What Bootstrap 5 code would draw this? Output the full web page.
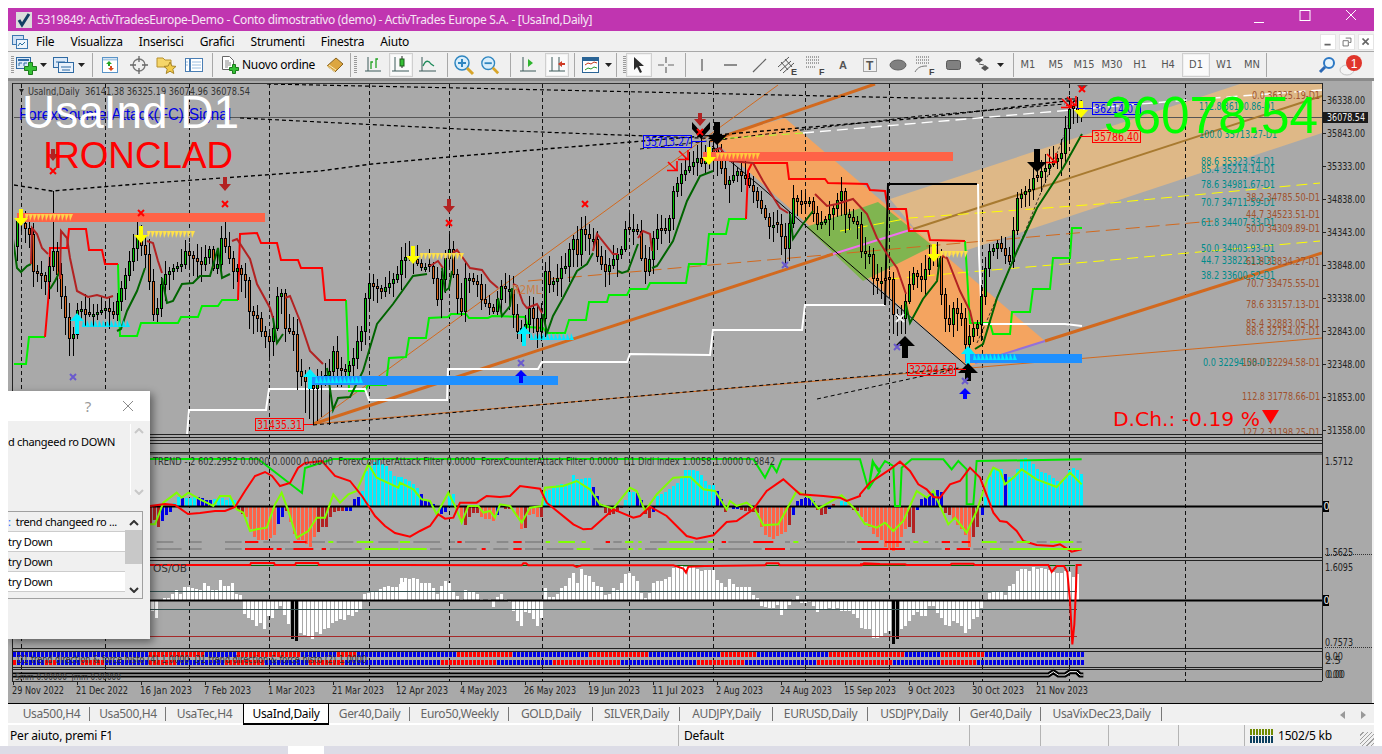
<!DOCTYPE html>
<html lang="it">
<head>
<meta charset="utf-8">
<title>ActivTrades</title>
<link href="https://cdn.jsdelivr.net/npm/bootstrap@5.3.0/dist/css/bootstrap.min.css" rel="stylesheet">
<style>
html,body{height:754px;overflow:hidden;background:#fff}
body{font-family:"Noto Sans","Open Sans",sans-serif;font-size:12px;color:#000}
.mt-win{margin:8px 8px 0;width:1366px;height:738px;background:#f0f0f0;display:flex;flex-direction:column}
.mt-title{height:23px;background:#c035b0;color:#f6e6f4;padding-left:8px;font-size:12px;letter-spacing:-.33px}
.mt-logo{width:16px;height:16px;margin-right:5px}
.mt-wc{width:46px;height:23px}
.mt-menu{height:21px;border-bottom:1px solid #a8a8a8;background:#f0f0f0;padding-left:3px;padding-top:1px}
.mt-menu-ic{width:18px;height:16px;margin-right:7px}
.mt-mi{margin-right:16px;font-size:12px;letter-spacing:-.2px}
.mt-mdi{width:16px;height:16px;background:#fff;margin-right:3px;border:1px solid #e4e4e4}
.mt-tools{height:27px;display:grid;align-items:center;justify-items:center;padding-left:3px;background:#f0f0f0;border-bottom:1px solid #8c8c8c;grid-template-columns:3px 25px 9px 3px 26px 8px 8px 34px 24px 30px 26px 6px 107px 30px 1px 6px 32px 24px 30px 5px 32px 20px 11px 34px 24px 6px 3px 26px 8px 5px 9px 26px 28px 6px 32px 28px 28px 28px 28px 26px 28px 28px 28px 28px 28px 8px 3px 7px 28px 28px 28px 28px 28px 28px 28px 28px 28px 1px 1fr 24px 26px 9px}
.mt-tools>*{height:24px;width:100%;display:flex;align-items:center;justify-content:center}
.mt-gr{background:repeating-linear-gradient(#9a9a9a 0 1px,transparent 1px 2px) right center/3px 18px no-repeat}
.mt-sp{border-right:1px solid #a8a8a8}
.mt-on{background:#fafafa;border:1px solid #cfcfcf;box-shadow:inset 0 0 0 1px #f0f0f0}
.mt-per{font-size:11px;color:#555;font-family:"DejaVu Sans",sans-serif;font-stretch:condensed}
.mt-ord{font-size:12px;justify-content:flex-start!important;padding-left:7px;gap:2px;white-space:nowrap;letter-spacing:-.3px}
.mt-chart{position:relative;height:624px;background:#a9a9a9;overflow:hidden}
.mt-chart svg.mt-plot{display:block}
.mt-dlg{position:absolute;left:0;top:312px;width:142px;height:248px;background:#f0f0f0;box-shadow:3px 3px 8px rgba(0,0,0,.45);overflow:hidden;font-size:11px;letter-spacing:-.3px;white-space:nowrap}
.mt-dlgh{height:30px;background:#fff;color:#9a9a9a;font-size:15px;justify-content:flex-end;padding-right:16px;gap:31px}
.mt-msg{height:90px;padding-top:13px}
.mt-vs{width:16px;border-left:1px solid #fff;color:#c4c4c4;margin-top:-10px}
.mt-lst{margin-top:0;height:88px;width:135px;border:1px solid #a0a0a0;border-left:0;background:#f0f0f0}
.mt-rows{width:117px;overflow:hidden}
.mt-row{height:20px;line-height:19px;border-bottom:1px solid #ccc;background:#fff;overflow:hidden}
.mt-row.alt{background:#f0f0f0}
.mt-thumb{height:34px;background:#c8c8c8;margin:4px 0 23px}
.mt-tabs{height:20px;display:grid;grid-template-columns:5px 77px 76px 77px 86px 81px 99px 84px 87px 93px 95px 92px 81px 121px 1fr;background:#f0f0f0;border-top:1px solid #000;color:#666;font-size:12px;margin-top:0;letter-spacing:-.35px}
.mt-tab{text-align:center;line-height:19px;position:relative;white-space:nowrap}
.mt-tab:not(.act)::after{content:"";position:absolute;right:0;top:3px;height:14px;border-right:1px solid #777}
.mt-tab.preact::after,.mt-tab.act::after{display:none}
.mt-tab.act{background:#fff;color:#000;border:1px solid #000;border-top:0;border-bottom-width:2px}
.mt-stat{flex:1;display:grid;grid-template-columns:670px 291px 71px 68px 70px 66px 130px;background:#f0f0f0;border-top:2px solid #fff;align-items:stretch;font-size:12px;letter-spacing:-.2px}
.mt-stat>div{border-left:1px solid #b4b4b4;padding-left:5px;line-height:21px;white-space:nowrap}
.mt-stat>div:first-child{border:0;padding-left:2px}
.mt-grip{background:repeating-linear-gradient(135deg,transparent 0 2px,#a0a0a0 2px 3px) right bottom/14px 14px no-repeat}
.mt-desk{height:8px;margin:0;display:grid;grid-template-columns:288px 36px 1fr}
.mt-desk i{background:#dcdce6}
.mt-desk i:nth-child(2){background:#fff}
.ct{font-family:"DejaVu Sans",sans-serif;font-stretch:condensed}
.ca{font-family:"Liberation Sans",sans-serif}
</style>
</head>
<body>
<div class="mt-win">
  <div class="mt-title d-flex align-items-center">
    <svg class="mt-logo" viewBox="0 0 16 16"><rect width="16" height="16" fill="#dcdcdc"/><path d="M3 8l3 5 7-11" fill="none" stroke="#123f63" stroke-width="3"/></svg>
    <span class="flex-grow-1">5319849: ActivTradesEurope-Demo - Conto dimostrativo (demo) - ActivTrades Europe S.A. - [UsaInd,Daily]</span>
    <svg class="mt-wc" viewBox="0 0 46 23"><path d="M18 14.500h10" stroke="#fff"/></svg>
    <svg class="mt-wc" viewBox="0 0 46 23"><rect x="18" y="2.500" width="10" height="10" fill="none" stroke="#fff"/></svg>
    <svg class="mt-wc" viewBox="0 0 46 23"><path d="M18 2l10 10M28 2L18 12" stroke="#fff"/></svg>
  </div>
  <div class="mt-menu d-flex align-items-center">
    <svg class="mt-menu-ic" viewBox="0 0 18 16"><rect x="1.500" y="1.500" width="11" height="9" fill="#cfe0f4" stroke="#3d78b0"/><rect x="5.500" y="5.500" width="11" height="9" fill="#eef5fc" stroke="#3d78b0"/><path d="M7 12l2-3 2 2 3-3" fill="none" stroke="#2a6f9e"/></svg>
    <span class="mt-mi">File</span><span class="mt-mi">Visualizza</span><span class="mt-mi">Inserisci</span><span class="mt-mi">Grafici</span><span class="mt-mi">Strumenti</span><span class="mt-mi">Finestra</span><span class="mt-mi">Aiuto</span>
    <span class="ms-auto d-flex">
      <svg class="mt-mdi" viewBox="0 0 16 16"><path d="M4 11h7" stroke="#666" stroke-width="2"/></svg>
      <svg class="mt-mdi" viewBox="0 0 16 16"><path d="M6.500 3.500h6v5h-2M3.500 6.500h6v6h-6z" fill="none" stroke="#666"/></svg>
      <svg class="mt-mdi me-0" viewBox="0 0 16 16"><path d="M4 4l7 7M11 4l-7 7" stroke="#666" stroke-width="2"/></svg>
    </span>
  </div>
  <div class="mt-tools">
    <div class="mt-gr"></div>
    <div><svg width="24" height="20" viewBox="0 0 24 20"><rect x="1.500" y="2.500" width="14" height="11" fill="#dbe9f8" stroke="#2f6aa3"/><path d="M3 5h11" stroke="#2f6aa3" stroke-width="2"/><path d="M4 11V8h3M9 11V8h3" fill="none" stroke="#2f6aa3"/><path d="M13.500 7.500h4v4h4v4h-4v4h-4v-4h-4v-4h4z" fill="#35c035" stroke="#1b7a1b"/></svg></div>
    <div><svg width="7" height="4"><path d="M0 0h7L3.500 4z" fill="#222"/></svg></div><i></i>
    <div><svg width="24" height="20" viewBox="0 0 24 20"><rect x="1.500" y="2.500" width="14" height="10" fill="#dbe9f8" stroke="#2f6aa3"/><path d="M4 7h9" stroke="#2f6aa3"/><rect x="6.500" y="7.500" width="15" height="10" fill="#eaf2fb" stroke="#2f6aa3"/><path d="M9 12h10M10 15h8" stroke="#2f6aa3"/></svg></div>
    <div><svg width="7" height="4"><path d="M0 0h7L3.500 4z" fill="#222"/></svg></div>
    <div class="mt-sp"></div>
    <div><svg width="20" height="20" viewBox="0 0 20 20"><rect x="2.500" y="2.500" width="15" height="15" fill="#fff" stroke="#5a94c8"/><path d="M3 4.500h14" stroke="#a8c8e4" stroke-width="2"/><path d="M9 6l3 3H10v2H8V9H6z" fill="#25a525"/><path d="M11 16l-3-3h2v-2h2v2h2z" fill="#d84a20"/></svg></div>
    <div><svg width="20" height="20" viewBox="0 0 20 20"><circle cx="10" cy="10" r="6" fill="none" stroke="#777" stroke-width="1.300"/><path d="M10 1v6M10 13v6M1 10h6M13 10h6" stroke="#666" stroke-width="1.300"/></svg></div>
    <div><svg width="20" height="20" viewBox="0 0 20 20"><path d="M1 3h6l2 2h6v7H1z" fill="#f5d66a" stroke="#b7902c"/><path d="M14 7l1.800 4 4.200.4-3.200 2.800 1 4.300-3.800-2.300-3.800 2.300 1-4.300-3.200-2.800 4.200-.4z" fill="#f3cc4b" stroke="#a8862a"/></svg></div>
    <div><svg width="20" height="18" viewBox="0 0 20 18"><rect x="1.500" y="2.500" width="17" height="13" fill="#fff" stroke="#4a7eb4"/><path d="M6 3v12" stroke="#4a7eb4" stroke-width="2"/><path d="M8 6h9M8 9h9M8 12h9M2 6h2M2 9h2" stroke="#9cbfe0"/></svg></div>
    <div class="mt-sp"></div>
    <div class="mt-ord"><svg width="20" height="20" viewBox="0 0 20 20"><path d="M2.500 1.500h7l4 4v9h-11z" fill="#fff" stroke="#666"/><path d="M5 6h4M5 8h6M5 10h6M5 12h3" stroke="#888"/><path d="M12.500 9.500h3v3h3v3h-3v3h-3v-3h-3v-3h3z" fill="#35c035" stroke="#1b7a1b"/></svg><span>Nuovo ordine</span></div>
    <div><svg width="18" height="16" viewBox="0 0 18 16"><path d="M1 9l9-8 7 6-8 8z" fill="#dca640" stroke="#8a6420"/><path d="M1 9l8 6M3 8l7 5" stroke="#fbeab8"/></svg></div>
    <div class="mt-sp"></div>
    <div class="mt-gr"></div>
    <div><svg width="20" height="20" viewBox="0 0 20 20"><path d="M5 2v14M2 16h16" stroke="#3d5a5a"/><path d="M8 14V7h2M13 13V4h2" fill="none" stroke="#22a322" stroke-width="1.300"/></svg></div>
    <div class="mt-on"><svg width="20" height="20" viewBox="0 0 20 20"><path d="M4 2v14M1 16h17" stroke="#3d5a5a"/><path d="M11 1v12" stroke="#222"/><rect x="9" y="4" width="4" height="7" fill="#35c035" stroke="#1b5a1b"/></svg></div>
    <div><svg width="20" height="20" viewBox="0 0 20 20"><path d="M4 2v14M1 16h17" stroke="#3d5a5a"/><path d="M5 11c3-7 6-5 8-2l3 2" fill="none" stroke="#1d8a5a" stroke-width="1.300"/></svg></div>
    <div class="mt-sp"></div>
    <div><svg width="22" height="22" viewBox="0 0 22 22"><circle cx="9" cy="9" r="7" fill="#d9eefb" stroke="#2f86c0" stroke-width="1.500"/><path d="M5 9h8M9 5v8" stroke="#2f86c0" stroke-width="2"/><path d="M14 14l6 6" stroke="#d8a52a" stroke-width="3"/></svg></div>
    <div><svg width="22" height="22" viewBox="0 0 22 22"><circle cx="9" cy="9" r="7" fill="#d9eefb" stroke="#2f86c0" stroke-width="1.500"/><path d="M5 9h8" stroke="#2f86c0" stroke-width="2"/><path d="M14 14l6 6" stroke="#d8a52a" stroke-width="3"/></svg></div>
    <div class="mt-sp"></div>
    <div><svg width="20" height="20" viewBox="0 0 20 20"><path d="M5 2v14M2 16h16" stroke="#3d5a5a"/><path d="M10 4l5 4-5 4z" fill="#2fb52f"/></svg></div>
    <div class="mt-on"><svg width="20" height="20" viewBox="0 0 20 20"><path d="M5 2v14M12 2v14M2 16h16" stroke="#3d5a5a"/><path d="M19 9h-3V7l-4 3 4 3v-2h3z" fill="#cf3a24" transform="translate(-1 -1)"/></svg></div>
    <div class="mt-sp"></div><i></i>
    <div><svg width="18" height="16" viewBox="0 0 18 16"><rect x=".5" y=".5" width="16" height="15" fill="#fff" stroke="#2a6496"/><rect x="1" y="1" width="15" height="3" fill="#2a6496"/><path d="M3 8l3-2 3 1 3-2 3 1" fill="none" stroke="#c43a1c"/><path d="M3 13l3-2 3 1 3-2 3 1" fill="none" stroke="#2a9a2a"/></svg></div>
    <div><svg width="7" height="4"><path d="M0 0h7L3.500 4z" fill="#222"/></svg></div>
    <div class="mt-sp"></div>
    <div class="mt-gr"></div>
    <div class="mt-on"><svg width="16" height="18" viewBox="0 0 16 18"><path d="M3 1v13l3-3 3 6 2-1-3-6h5z" fill="#2b2b2b"/></svg></div>
    <div><svg width="18" height="18" viewBox="0 0 18 18"><path d="M9 1v6M9 11v6M1 9h6M11 9h6" stroke="#666" stroke-width="1.200"/></svg></div>
    <div class="mt-sp"></div>
    <div><svg width="20" height="18" viewBox="0 0 20 18"><path d="M10 3v12" stroke="#555" stroke-width="1.200"/></svg></div>
    <div><svg width="20" height="18" viewBox="0 0 20 18"><path d="M2 9h13" stroke="#555" stroke-width="1.300"/></svg></div>
    <div><svg width="20" height="18" viewBox="0 0 20 18"><path d="M3 16L16 3" stroke="#666" stroke-width="1.200"/></svg></div>
    <div><svg width="24" height="22" viewBox="0 0 24 22"><path d="M2 13L13 3M4 17L15 7M7 19L18 9M5 8l7 8M9 5l7 8" stroke="#555" fill="none"/><text x="15" y="21" font-size="9" font-weight="700" fill="#444" class="ca">E</text></svg></div>
    <div><svg width="24" height="22" viewBox="0 0 24 22"><path d="M2 3h14M2 6h14M2 9h14M2 13h10" stroke="#555" stroke-dasharray="1 1"/><text x="15" y="21" font-size="9" font-weight="700" fill="#444" class="ca">F</text></svg></div>
    <div class="ca fw-bold mt-per">A</div>
    <div><svg width="20" height="20" viewBox="0 0 20 20"><rect x="3.500" y="3.500" width="13" height="13" fill="none" stroke="#555" stroke-dasharray="1 1"/><text x="6" y="15" font-size="12" font-weight="700" fill="#555" class="ca">T</text></svg></div>
    <div><svg width="20" height="14" viewBox="0 0 20 14"><ellipse cx="10" cy="7" rx="8" ry="5" fill="#808080" stroke="#606060"/></svg></div>
    <div><svg width="24" height="22" viewBox="0 0 24 22"><path d="M2 3h14M2 6h14M2 9h14" stroke="#555" stroke-dasharray="1 1"/><path d="M1 18c3-5 6-6 12-6" fill="none" stroke="#777"/><text x="15" y="21" font-size="9" font-weight="700" fill="#444" class="ca">F</text></svg></div>
    <div><svg width="18" height="14" viewBox="0 0 18 14"><rect x="1.500" y="2.500" width="14" height="9" rx="2" fill="#808080" stroke="#5a5a5a"/></svg></div>
    <div><svg width="16" height="18" viewBox="0 0 16 18"><path d="M5 1l4 3-4 3-4-3zM11 9l4 3-4 3-4-3z" fill="#555"/><path d="M5 8l5 1" stroke="#555"/></svg></div>
    <div><svg width="7" height="4"><path d="M0 0h7L3.500 4z" fill="#222"/></svg></div>
    <div></div>
    <div class="mt-sp"></div>
    <div class="mt-per">M1</div><div class="mt-per">M5</div><div class="mt-per">M15</div><div class="mt-per">M30</div><div class="mt-per">H1</div><div class="mt-per">H4</div><div class="mt-per mt-on">D1</div><div class="mt-per">W1</div><div class="mt-per">MN</div>
    <div class="mt-sp"></div><i></i>
    <div><svg width="18" height="18" viewBox="0 0 18 18"><circle cx="11" cy="7" r="5" fill="#e8f4fc" stroke="#2c78c4" stroke-width="2"/><path d="M7 11l-5 5" stroke="#2c68b4" stroke-width="3"/></svg></div>
    <div><svg width="26" height="24" viewBox="0 0 26 24"><ellipse cx="8" cy="17" rx="7" ry="5" fill="#f4f4f4" stroke="#c4c4c4"/><circle cx="15" cy="10" r="8" fill="#e0352b"/><text x="15" y="14.500" font-size="12" fill="#fff" text-anchor="middle" class="ca">1</text></svg></div>
    <i></i>
  </div>
  <div class="mt-chart">
    <svg id="plot" class="mt-plot" width="1366" height="624" viewBox="8 78 1366 624"></svg>
    <div class="mt-dlg">
      <div class="mt-dlgh d-flex align-items-center"><span>?</span><svg width="12" height="12" viewBox="0 0 12 12"><path d="M1 1l10 10M11 1L1 11" stroke="#8a8a8a"/></svg></div>
      <div class="mt-msg d-flex">
        <div class="flex-grow-1">d changeed ro DOWN</div>
        <div class="mt-vs me-1 d-flex flex-column justify-content-between align-items-center mb-3 pt-1"><svg width="10" height="6"><path d="M1 5l4-4 4 4" fill="none" stroke="#c8c8c8" stroke-width="2"/></svg><svg width="10" height="6"><path d="M1 1l4 4 4-4" fill="none" stroke="#c8c8c8" stroke-width="2"/></svg></div>
      </div>
      <div class="mt-lst d-flex">
        <div class="mt-rows">
          <div class="mt-row alt"><span class="text-primary">:</span>&nbsp; trend changeed ro ...</div>
          <div class="mt-row">try Down</div>
          <div class="mt-row alt">try Down</div>
          <div class="mt-row">try Down</div>
        </div>
        <div class="flex-grow-1 d-flex flex-column align-items-stretch text-center">
          <svg class="mx-auto mt-2" width="10" height="6"><path d="M1 5l4-4 4 4" fill="none" stroke="#333" stroke-width="2"/></svg>
          <div class="mt-thumb"></div>
          <svg class="mx-auto" width="10" height="6"><path d="M1 1l4 4 4-4" fill="none" stroke="#333" stroke-width="2"/></svg>
        </div>
      </div>
    </div>
  </div>
  <div class="mt-tabs">
    <i></i>
    <div class="mt-tab">Usa500,H4</div><div class="mt-tab">Usa500,H4</div><div class="mt-tab preact">UsaTec,H4</div><div class="mt-tab act">UsaInd,Daily</div><div class="mt-tab">Ger40,Daily</div><div class="mt-tab">Euro50,Weekly</div><div class="mt-tab">GOLD,Daily</div><div class="mt-tab">SILVER,Daily</div><div class="mt-tab">AUDJPY,Daily</div><div class="mt-tab">EURUSD,Daily</div><div class="mt-tab">USDJPY,Daily</div><div class="mt-tab">Ger40,Daily</div><div class="mt-tab">UsaVixDec23,Daily</div>
    <div class="d-flex justify-content-end align-items-center gap-3 pe-2"><svg width="5" height="8"><path d="M5 0v8L0 4z" fill="#999"/></svg><svg width="5" height="8"><path d="M0 0v8l5-4z" fill="#999"/></svg></div>
  </div>
  <div class="mt-stat">
    <div>Per aiuto, premi F1</div><div>Default</div><div></div><div></div><div></div><div></div>
    <div class="mt-grip d-flex align-items-center gap-1"><svg width="24" height="14" viewBox="0 0 24 14"><path d="M1 0v6M4 0v6M7 0v6M10 0v6M13 0v6M16 0v6M19 0v6M22 0v6" stroke="#6f8a00" stroke-width="2"/><path d="M1 7v7M4 7v7M7 7v7M10 7v7M13 7v7M16 7v7M19 7v7M22 7v7" stroke="#0c3f5e" stroke-width="2"/></svg><span>1502/5 kb</span></div>
  </div>
</div>
<div class="mt-desk"><i></i><i></i><i></i></div>
<script src="https://cdn.jsdelivr.net/npm/bootstrap@5.3.0/dist/js/bootstrap.bundle.min.js"></script>
<script>
(function(){
let o='';
const pts=(s,ox=0,oy=0,k=1)=>s.trim().split(/\s+/).map(p=>{const[a,b]=p.split(',').map(Number);return[ox+a/k,oy+b/k]});
const z12=s=>pts(s,400,445,3),z8=s=>pts(s,860,440,3),z5=s=>pts(s,0,380,3);
const L=(p,c,w=2,x='')=>{o+=`<polyline points="${p.map(q=>q.join(',')).join(' ')}" fill="none" stroke="${c}" stroke-width="${w}" ${x}/>`};
const R=(x,y,w,h,c,e='')=>{o+=`<rect x="${x}" y="${y}" width="${w}" height="${h}" fill="${c}" ${e}/>`};
const T=(x,y,s,f,sz,cl='ct',len=0,e='')=>{o+=`<text x="${x}" y="${y}" fill="${f}" font-size="${sz}" class="${cl}" ${len?`textLength="${len}" lengthAdjust="spacingAndGlyphs"`:''} ${e}>${s}</text>`};
const Pg=(s,c,e='')=>{o+=`<polygon points="${s}" fill="${c}" ${e}/>`};
const dash='stroke-dasharray="4 3"';

o+=`<defs><clipPath id="m"><rect x="14" y="83" width="1308" height="350"/></clipPath></defs>`;
R(8,78,1366,624,'#a9a9a9');R(1372,78,2,624,'#f0f0f0');
R(8,78,1366,2,'#8a8a8a');

o+='<g clip-path="url(#m)">';
Pg('890,198 1240,83 1322,83 1322,132 940,258','#deb887');
Pg('712,138 785,117 1045,340 968,366','#f4a460');
Pg('806,226 878,201 933,245 863,280','#80b550');
o+='</g>';
[21,105,189,269,369,449,542,629,713,805,889,982,1069,1185].forEach(x=>{L([[x+.5,83],[x+.5,680]],'#111',1,dash)});
o+='<g clip-path="url(#m)">';
L([[14,116.5],[1322,116.5]],'#555',1);
L([[313,423],[778,84]],'#d2691e',1);
L([[313,423],[1322,337]],'#d2691e',1);
L([[528,280],[1213,220]],'#d2691e',1,'stroke-dasharray="14 6"');
L([[313,423],[833,253]],'#d2691e',3);
L([[833,253],[913,228]],'#ee72ee',2);
L([[913,228],[1322,95]],'#a87a30',2);
L([[710,140],[875,83]],'#d2691e',3);
L([[975,362],[1045,340]],'#9370db',2);
L([[1045,340],[1322,252]],'#d2691e',3);
L([[14,184],[52,190],[138,183],[320,170],[372,163],[460,155],[643,140],[920,117],[1067,100],[1082,100]],'#000',1.400,dash);
L([[240,117],[460,128],[647,135],[727,138]],'#000',1.200,dash);
L([[267,83],[460,87],[917,97],[1075,98]],'#000',1.200,dash);
L([[313,424],[640,395],[960,367]],'#000',1,dash);
L([[817,398],[960,367]],'#000',1,dash);
L([[640,148],[920,115],[1065,103]],'#000',1,dash);
L([[803,132],[920,122],[1187,99],[1322,89]],'#fff',1.400,'stroke-dasharray="11 6"');
L([[717,138],[803,132]],'#adff2f',1,'stroke-dasharray="8 5"');
L([[840,230],[910,217],[1100,203],[1320,182]],'#ffff00',1,'stroke-dasharray="11 6"');
L([[890,278],[980,270],[1100,260],[1320,240]],'#ffff00',1,'stroke-dasharray="11 6"');
L([[712,145],[760,185],[968,366]],'#000',1);
L([[977,342],[1013,260],[1070,120]],'#111',.800,'stroke-dasharray="3 2"');
const green=[pts('13,363 26,363 29,336 45,336'),pts('118,263 120,335 137,335 141,322 178,322 181,316 198,316 202,305 218,305 222,299 238,299'),pts('346,299 348,347 349,390 365,390 368,384 386,384 389,357 406,356 409,337 426,337 429,317 448,316 451,313 466,313 469,317 488,317 492,315 525,316 528,326 543,327 547,332 565,332 569,319 586,319 589,301 607,301 609,294 627,294 630,288 647,288 650,282 686,282 689,263 706,263 709,233 726,233 729,218 746,218'),pts('965,240 967,272 970,322 990,322 993,333 1010,333 1012,311 1030,311 1033,288 1050,288 1053,257 1070,257 1072,227 1082,227')];
const red=[pts('45,336 47,313 49,290 50,247 67,247 69,228 86,228 89,249 102,249 105,263 118,263'),pts('238,299 240,233 257,232 261,242 277,242 281,259 298,259 301,267 322,267 325,299 346,299'),pts('746,218 748,170 752,162 787,162 789,178 825,178 828,182 867,183 870,189 885,190 888,208 906,208 909,230 928,230 930,239 965,240')];
green.forEach(p=>L(p,'#00f000',2));red.forEach(p=>L(p,'#f00',2));
L(pts('187,434 189,409 266,409 269,388 365,388 369,399 447,399'),'#fff',2);
L(pts('447,400 448,368 538,368 542,361 627,361 630,353 710,354 713,329 802,329 805,304 885,304'),'#fff',2);
L(pts('885,304 888,183 977,183'),'#000',2);
L(pts('978,183 979,253 982,323 1065,323 1082,325'),'#fff',2);
const cl=pts('13,245 17,220 22,223 29,233 33,270 42,275 45,280 53,250 61,295 69,337 73,333 78,303 82,310 85,313 93,313 105,307 113,313 121,287 129,260 133,247 137,235 145,253 149,280 153,313 157,307 161,283 165,273 173,267 182,263 185,250 193,257 201,263 209,248 213,267 217,263 221,237 226,247 233,270 237,267 246,280 249,310 257,317 261,330 269,340 273,327 277,295 281,292 285,327 293,333 297,370 305,380 313,387 321,377 329,370 333,350 337,367 345,370 353,357 357,340 361,330 365,297 369,282 381,290 389,282 397,273 402,255 413,258 422,267 429,265 433,277 437,298 445,257 449,248 457,297 461,310 465,277 469,277 477,283 481,298 485,302 493,310 501,285 509,288 513,313 517,330 525,323 529,307 533,317 537,330 541,317 545,270 549,283 557,277 561,267 565,265 569,248 573,238 577,253 581,228 585,233 589,237 593,238 597,255 605,270 613,258 621,248 625,228 633,228 637,230 641,257 645,270 649,258 653,237 657,228 665,229 669,217 673,190 681,173 689,165 697,157 701,162 709,153 713,147 721,167 725,183 737,170 745,177 753,190 761,207 769,225 777,223 785,247 793,197 801,203 809,200 817,223 825,218 833,207 841,190 845,213 857,223 861,250 869,253 873,277 881,280 889,278 893,313 901,317 909,283 913,272 921,278 929,257 937,255 941,293 945,317 949,323 953,307 961,317 965,343 973,327 977,323 985,267 989,250 993,247 997,242 1001,247 1009,260 1017,197 1021,193 1025,190 1029,188 1033,177 1037,176 1041,170 1049,163 1057,157 1061,152 1065,127 1069,108 1073,107 1081,113');
const at=x=>{for(let i=1;i<cl.length;i++)if(x<=cl[i][0]){const[a,b]=cl[i-1],[c,d]=cl[i];return b+(d-b)*(x-a)/(c-a)}return cl[cl.length-1][1]};
let seed=7;const rnd=()=>{seed=(seed*16807)%2147483647;return seed/2147483647};
const hi={53:190,225:221,449:233,69:355,73:355,585:215,701:130,717:135,897:335,1069:95,1081:100,305:412,309:418,313:424,317:420,321:416,329:424,893:333};
let wick='',body='';
let prev=at(13);
for(let x=13;x<=1081;x+=4){
 const c=Math.round(at(x));let op=Math.round(prev);
 if(Math.abs(c-op)<2)op=c+(rnd()<.5?2:-2);
 const top=Math.min(c,op),bot=Math.max(c,op);
 let h=top-2-rnd()*13,l=bot+3+rnd()*17;
 if(hi[x]){if(hi[x]<top)h=hi[x];else l=hi[x]}
 wick+=`M${x+.5} ${h|0}V${l|0}`;
 body+=`<rect x="${x-.5}" y="${top+.5}" width="2" height="${bot-top}" fill="${c<op?'#00c400':'#e0661a'}" stroke="#000" stroke-width="1" shape-rendering="crispEdges"/>`;
 prev=c;
}
o+=`<path d="${wick}" stroke="#000" stroke-width="1" shape-rendering="crispEdges"/>`+body;
const dg='#006400',fb='#b22222';
[[dg,'13,238 17,267 21,271 27,265 31,263'],[fb,'31,263 32,227 37,233 42,247 48,253'],[dg,'50,288 55,280 60,270'],[fb,'60,278 61,230 67,237 70,257 77,290 88,296 97,294 107,297 113,295'],[dg,'117,330 121,328 127,310 137,290 145,267'],[fb,'147,240 153,242 158,260 162,272'],[dg,'162,277 167,302 173,300 182,283 193,282 200,275 210,275 218,247 222,277 230,273'],[fb,'232,240 237,238 250,258 257,283 270,307 273,317'],[dg,'273,317 277,342 283,333'],[fb,'285,297 290,295 300,320 310,350 323,363'],[dg,'327,367 333,409 338,397 350,396 363,370 377,323 393,303 413,275 427,273'],[fb,'430,265 438,260 443,267'],[dg,'442,267 445,290 449,287 452,270'],[fb,'452,253 457,249 463,257 470,267 482,269 490,280 498,287'],[dg,'498,297 502,315 510,305 512,287'],[fb,'513,283 517,285 523,302 527,307 537,303 542,312'],[dg,'543,313 547,332 553,315 563,297 577,270 587,263 593,252'],[fb,'593,250 597,233 613,253 618,253'],[dg,'618,270 622,272 628,270 638,243'],[fb,'638,237 643,230 650,233 652,250'],[dg,'652,267 657,265 673,240 687,200 700,175 713,170'],[fb,'713,150 720,147 730,160 753,162 763,180 780,207 788,212'],[dg,'790,213 793,238 803,223 813,210'],[fb,'815,193 827,205 837,203 853,198 867,213 877,237 887,253 897,267 906,293'],[dg,'906,303 910,322 923,298 937,280 940,257'],[fb,'942,255 947,257 960,290 970,310 973,323'],[dg,'975,348 983,343 997,297 1017,250 1037,207 1063,167 1082,133']].forEach(([c,s])=>L(pts(s),c,2));
R(17,212,248,9,'#ff6347');R(703,151,250,9,'#ff6347');
R(312,375,246,9,'#1e90ff');R(965,353,117,9,'#1e90ff');
const A=(x,y1,y2,c,sw,hw,hh)=>{const d=y2>y1?1:-1;Pg(`${x-sw},${y1} ${x+sw},${y1} ${x+sw},${y2-d*hh} ${x+hw},${y2-d*hh} ${x},${y2} ${x-hw},${y2-d*hh} ${x-sw},${y2-d*hh}`,c)};
const X=(x,y,c,s=3)=>{o+=`<path d="M${x-s} ${y-s}L${x+s} ${y+s}M${x+s} ${y-s}L${x-s} ${y+s}" stroke="${c}" stroke-width="2"/>`};
const chain=(x1,x2,y,c,up)=>{for(let x=x1;x<=x2;x+=4){Pg(up?`${x+1},${y-4} ${x+4},${y+3} ${x},${y+3}`:`${x},${y-3} ${x+4},${y-3} ${x+1},${y+4}`,c)}};
chain(25,70,216,'#ffd24a');chain(147,192,233,'#ffe14a');chain(420,462,255,'#ffe14a');chain(716,758,155,'#ffc83c');chain(940,966,253,'#ffe14a');
chain(82,126,323,'#00e8ff',1);chain(315,362,379,'#00e8ff',1);chain(530,573,336,'#00e8ff',1);chain(973,1016,356,'#00e8ff',1);
[[21,208,225],[141,225,242],[413,245,263],[709,146,164],[934,243,261],[1081,100,117]].forEach(a=>A(a[0],a[1],a[2],'#ff0',2,7,8));
[[77,333,312],[310,388,368],[524,345,325],[968,365,345]].forEach(a=>A(a[0],a[1],a[2],'#00f0ff',2,7,8));
[[700,112,125],[225,176,190],[449,198,212],[53,148,160]].forEach(a=>A(a[0],a[1],a[2],'#b22222',2,6,7));
Pg('1077,84 1088,84 1082,89','#555');
A(717,121,144,'#000',3,10,10);A(1037,148,171,'#000',3,10,10);
Pg('692,121 701,131 710,121 710,128 701,138 692,128','#000');
A(905,357,335,'#000',3,10,10);A(968,380,362,'#000',3,10,10);
A(521,382,369,'#00f',2,6,6);A(965,398,387,'#00f',2,6,6);
[[53,170],[141,212],[225,203],[449,222],[585,203],[700,131],[1082,88]].forEach(a=>X(a[0],a[1],'#f00'));
[[73,376],[521,362],[785,264],[897,346],[965,380]].forEach(a=>X(a[0],a[1],'#6a5acd'));
X(900,317,'#f4f4f4',4);
const ra=(x,y)=>{o+=`<path d="M${x-8} ${y-8}L${x} ${y}M${x-9} ${y+.5}H${x+2}M${x+1} ${y-9}V${y+1}" stroke="#f00" stroke-width="1.600" fill="none"/>`};
[[676,169],[687,158],[1055,161],[1070,106],[1075,104]].forEach(a=>ra(a[0],a[1]));
T(512,293,'R2ML','#c8804a',12);
T(1199,109,'112.8 36130.86-D1','#008b8b',10,'ct',76);T(1199,137,'100.0 35713.27-D1','#008b8b',10,'ct',78);
[['88.6 35323.54-D1',1201,164],['85.4 35214.14-D1',1201,172],['78.6 34981.67-D1',1201,187],['70.7 34711.59-D1',1201,205],['61.8 34407.33-D1',1201,225],['50.0 34003.93-D1',1201,251],['44.7 33822.13-D1',1201,263],['38.2 33600.52-D1',1201,278],['0.0 32294.58-D1',1203,365]].forEach(a=>T(a[1],a[2],a[0],'#008b8b',10,'ct',a[0].length==15?68:74));
[['0.0 36325.19-D1',98],['38.2 34785.50-D1',200],['44.7 34523.51-D1',217],['50.0 34309.89-D1',231],['61.8 33834.27-D1',264],['70.7 33475.55-D1',286],['78.6 33157.13-D1',307],['85.4 32883.05-D1',326],['88.6 32754.07-D1',334],['100.0 32294.58-D1',365],['112.8 31778.66-D1',399],['127.2 31198.25-D1',435]].forEach(a=>{const w=a[0].length==15?68:a[0].length==16?74:78;T(1320-w,a[1],a[0],'#a0522d',10,'ct',w)});
const tag=(x,y,s,c,w=48)=>{R(x+.5,y+.5,w,12,'none',`stroke="${c}"`);T(x+2,y+11,s,c,12,'ct',w-3)};
L([[1077,107.5],[1092,107.5]],'#00f',1);tag(1092,101,'36214.07','#00f');
L([[1080,135.5],[1092,135.5]],'#f00',1);tag(1092,129,'35786.40','#f00');
L([[692,140.5],[706,140.5]],'#00f',1);tag(643,134,'35713.27','#00f');
L([[955,368.5],[966,368.5]],'#f00',1);tag(907,362,'32294.58','#f00');
L([[303,423.5],[313,423.5]],'#f00',1);tag(255,417,'31435.31','#f00');
Pg('19,88 24,88 21.500,92','#222');
T(28,94,'UsaInd,Daily&#160;&#160;36141.38 36325.19 36074.96 36078.54','#333',10,'ct',222);
T(19,119,'ForexCounterAttack(FC)-Signal','#0000e6',16.500,'ca',212);
T(22,127,'UsaInd D1','#fff',47,'ca',217);
T(43,167,'IRONCLAD','#f00',37,'ca',190);
T(1104,132,'36078.54','#00ff00',52,'ca',214);
T(1113,425,'D.Ch.: -0.19 %','#f00',19,'ct',147,'style="font-stretch:normal"');
Pg('1262,409 1279,409 1270.500,423','#f00');
o+='</g>';

const hist=`150f-18 154f-13 158f-20 162b-14 166b-8 170b-5 174c3 178c9 182b8 186c8 190c8 194c9 198b9 202b8 206b6 210b6 214c7 218c8 222c8 226c6 230c8 234c6 238f-3 242f-7 246t-10 250t-22 254t-30 258t-33 262t-33 266t-33 270t-31 274t-28 278b-17 282b-10 286f-4 290t-15 294t-27 298t-33 302t-33 306t-37 310t-40 314t-30 318f-25 322f-20 326f-20 330f-10 334f-5 338f-4 342f-4 346b-4 350b-4 354b7 358b9 362c15 366c35 370c40 374c44 378c46 382c42 386c40 390c35 394c30 398c29 401c29 405c27 409c25 413c22 417c18 421b12 425b6 429b5 433b2 441b-7 445b-5 449c10 453c12 461t-15 465f-18 469f-10 473f-6 477f-6 481t-10 485t-12 489t-12 493t-14 497b-8 505f-2 509f-2 517t-10 521t-22 525f-21 529t-8 533t-7 537t-10 541f-10 545c15 549c16 553c18 557c21 561c22 565c22 569c23 573c31 577c27 581c27 585c28 589c28 593b19 597b10 601b2 605f-6 609f-8 613f-7 617f-5 621f-1 625c6 629c14 633c14 637b13 641b6 645f-7 649f-11 653b-5 657c10 661c12 665c14 669c17 673c20 677c23 681c28 685c36 689c36 693c36 697c35 701c31 705c25 709c21 713c21 717b15 721b7 725f-5 733b-2 737b-2 741f-3 745f-4 749f-4 753f-5 757f-6 761t-20 765t-28 769t-30 773t-32 777t-29 781t-27 785t-25 789f-18 793b-8 797b5 801b7 805b8 809b8 813b5 817f-3 821f-8 825f-7 829b-2 833f2 841c5 845c4 853f-3 857f-4 861t-10 865t-15 869t-20 873t-27 877t-30 881t-33 885t-40 889t-43 893t-44 897t-40 901t-30 905t-22 909f-20 913f-26 917b-3 921b7 925b9 929b10 933b13 937b16 941b14 945f-6 949f-8 953t-12 957t-18 961t-22 965t-28 969t-40 973f-30 977f-20 982b-8 985c9 989c29 993c37 997c37 1001c37 1005b32 1009c29 1013c30 1017c37 1021c47 1025c48 1029c45 1033c42 1037c37 1041c34 1045c33 1049c31 1053c28 1057c25 1061c24 1065c29 1069c36 1073c38 1077c36 1081c32`.split(' ');
const hc={c:'#00f0ff',b:'#0000e6',t:'#ff6347',f:'#b22222'};
hist.forEach(s=>{const m=s.match(/(\d+)([cbtf])(-?\d+)/),x=+m[1],h=+m[3];R(x-1,h>0?505-h:506,3,Math.abs(h),hc[m[2]])});
L([[14,505.5],[1322,505.5]],'#000',2);
L(pts('150,458 258,458 302,492 305,467 333,458 748,458').concat(z12('1060,40 1095,95 1115,55 1130,78 1145,40 1380,40 1405,130 1420,50 1440,75')).concat(z8('25,145 38,60 55,90 75,60 100,75 105,195 120,195 125,80 155,55 250,55 275,85 295,60 320,85 320,190 340,190 350,60 665,55')),'#00e600',2);
L(z5('450,430 465,430 490,365 530,335 545,350 565,335 600,355 640,375 660,345 690,345 710,385 730,395 750,450 770,445 800,440 825,370 845,335 865,390 890,470 925,450 950,410 975,410 1000,340 1020,365 1045,340 1070,330 1105,250 1130,290 1195,320').concat(z12('0,110 40,130 65,160 90,165 110,205 145,140 165,180 185,230 205,180 235,180 250,200 270,195 285,215 300,175 330,180 365,230 390,185 425,180 435,125 490,120 530,105 570,130 600,175 640,188 690,125 710,135 735,195 770,145 820,95 870,92 910,130 945,135 980,190 990,165 1010,180 1040,170 1065,190 1090,238 1135,235 1160,190 1190,135 1230,155 1255,188 1325,148 1365,190 1395,235')).concat(z8('20,250 50,260 75,245 100,270 130,240 170,150 200,170 220,150 240,195 265,250 285,230 320,275 350,210 380,120 400,80 420,90 435,130 460,110 485,85 530,115 590,138 630,95 665,130')),'#7fff00',2);
L(pts('150,505 165,503 175,504 188,513 200,512 215,510 225,510 235,506 245,490 255,475 265,471 272,475 280,485 290,482 298,467 305,462 322,460 335,475 350,480 362,495 375,515 385,525 395,532').concat(z12('30,272 60,255 90,240 115,205 135,218 160,215 180,170 230,170 260,150 300,153 330,150 360,120 420,128 440,170 520,235 550,250 575,248 640,190 700,215 720,210 750,182 800,210 860,270 890,278 940,268 980,228 1010,225 1060,190 1100,135 1150,100 1200,145 1270,150 1320,155 1340,165 1380,150')).concat(z8('0,160 30,125 90,85 120,62 150,90 175,130 200,145 220,168 240,170 270,130 300,120 330,80 360,110 400,215 420,240 440,243 470,270 490,300 530,312 580,315 600,310 635,332 665,325')),'#f00',2);
const seg=(s,ox,k,y)=>s.split(' ').forEach(t=>{const m=t.match(/([gry])(\d+)-(\d+)/);R(ox+m[2]/k,y,(m[3]-m[2])/k,2,{g:'#8a8a8a',r:'#f00',y:'#7fff00'}[m[1]])});
seg('g470-520 g570-605 g675-725 r735-775 g790-870 r880-920 g935-975 y985-1000 g1010-1060 y1070-1120 g1135-1195',0,3,540);
seg('g470-545 g570-605 g675-725 r735-820 r830-845 g855-880 r880-940 r965-978 g990-1085 y1095-1195',0,3,547);
seg('y0-30 g40-120 g150-165 r172-185 g195-270 g290-325 r340-365 g375-425 y437-450 y475-525 y545-557 r617-630 g640-665 y675-700 y715-725 g750-800 y808-880 g885-920 y925-940 r965-978 g985-1050 r1060-1120 g1155-1170 y1180-1195 g1215-1335 g1340-1365 r1372-1435',400,3,540);
seg('y0-80 g90-125 g150-230 r245-257 g280-325 r340-365 g375-425 g440-520 y530-570 g580-680 y685-700 y715-725 g735-770 y775-940 g955-1085 r1095-1155 g1170-1380 r1385-1435',400,3,547);
seg('r0-55 r75-125 g135-150 y160-175 y190-205 g225-235 r245-270 g280-295 r305-330 y365-410 g420-460 y470-510 g530-560 y570-640 g650-665',860,3,540);
seg('r5-85 r90-135 g150-245 r255-270 r290-330 g340-380 y390-425 y448-665',860,3,547);
T(153,464,'TREND - 2 602.2952 0.0000 0.0000 0.0000&#160;&#160;ForexCounterAttack Filter 0.0000&#160;&#160;ForexCounterAttack Filter 0.0000&#160;&#160;D1 Didi index 1.0058 1.0000 0.9842','#333',10.500,'ct',622);
const v1=[-10,-17,null,2,2,6,10,6,13,13,12,11,10,17,14,10,10,20,14,14,17,6,5,-13,-17,-19,-25,-22,-28,-15,-17,-9,-5,-14,-23,-38,-40,-32,-34,-36,-38,-31,-33,-28,-27,-22,-20,-18,-19,-14,-15,-11,-9,6,7,9,9,11,13,14,13,13,16,18];
v1.forEach((h,i)=>{if(h===null)return;const x=152+i*4;const c=(x>=292&&x<=296)?'#000':'#fff';R(x-1,h>0?599-h:600,3,Math.abs(h),c)});
[22,22,21,22,21,17,17,17,12,6,14,19,17,9,4,1,10,9,8,6,1,0,1,-6,3,6,1,-1,-10,-20,-25,-11,-12,-18,-25,-17,12,3,3,6,12,14,22,27,17,31,25,24,18,14,13,5,6,12,10,17,26,27,24,19,7,2,7,17,19,19,21,23,32,33,35,33,34,33,31,29,30,30,30,20,17,13,21,16,13,13,13,13,5,2,-5,-6,-7,-7,-4,-14,-9,-4,1,4,-2,-2,-1,-5,-11,-9,-8,-7,-8,-7,-10,-10,-10,-13,-17,-27,-28,-28,-37,-37,-35,-32,-30].forEach((h,i)=>{const x=401+i*4;R(x-1,h>0?599-h:600,3,Math.abs(h),'#fff')});
[[893,-43,'#000'],[897,-38,'#000']].forEach(a=>R(a[0]-1,600,3,-a[1],a[2]));
[-28,-25,-20,-14,-11,-15,-15,-5,-5,-12,-17,-24,-25,-20,-22,-25,-32,-28,-18,-16,-7,1,7,8,9,8,5,14,16,29,31,31,29,33,31,32,31,30,28,27,27,29,28,23,26].forEach((h,i)=>{const x=901+i*4;R(x-1,h>0?599-h:600,3,Math.abs(h),'#fff')});
L([[14,599.5],[1322,599.5]],'#000',2);
L([[150,590.5],[1077,590.5]],'#2f4f4f',1);L([[150,608.5],[1077,608.5]],'#2f4f4f',1);L([[150,635.5],[1077,635.5]],'#a52a2a',1);
L([[150,564.5],[1075,564.5]],'#006400',1);
L(pts('150,564 250,564 251,562 274,562 275,564 295,564 296,562 318,562 319,564 400,564').concat(z12('365,358 370,352 378,352 385,358 520,358 530,363 545,358 820,358 850,368 858,380 865,362 915,360 1095,358 1100,352 1135,352 1140,358 1385,358 1392,352 1440,354')),'#f00',2);
L(z8('0,370 135,370 140,372 270,372 275,368 340,368 345,372 565,372 575,393 590,375 612,375 622,393 630,480 637,610 643,550 648,440 650,372 665,372'),'#f00',2);
T(153,571,'OS/OB','#333',10.500,'ct',34);
const dir=(segs,y)=>segs.forEach(([a,b,c])=>{for(let x=a;x<b;x+=4)R(x,y,3,5,c=='b'?'#0000e6':'#f00')});
dir([[13,149,'b'],[149,205,'r'],[205,237,'b'],[237,301,'r'],[301,337,'b'],[337,357,'r'],[357,457,'b'],[457,513,'r'],[513,589,'b'],[589,649,'r'],[649,721,'b'],[721,757,'r'],[757,829,'b'],[829,905,'r'],[905,941,'b'],[941,985,'r'],[985,1085,'b']],651);
dir([[13,17,'r'],[17,45,'b'],[45,57,'r'],[57,81,'b'],[81,105,'r'],[105,149,'b'],[149,177,'r'],[177,225,'b'],[225,265,'r'],[265,309,'b'],[309,345,'r'],[345,441,'b'],[441,497,'r'],[497,553,'b'],[553,621,'r'],[621,697,'b'],[697,745,'r'],[745,817,'b'],[817,893,'r'],[893,941,'b'],[941,977,'r'],[977,1085,'b']],659);
T(17,662,'D1 trend direction &amp; force histo (4) 1.0000&#160;&#160;D1 trend direction &amp; force histo (2) 1.0000','#333',10,'ct',350);
function z7w(){return pts('385,102 400,92 415,102 435,102 450,92 470,92 480,102 490,102',920,640,3)}
L(pts('13,674 1048,674').concat(z7w()),'#000',5);
L(pts('13,674 1048,674').concat(z7w()),'#fff',1);
T(15,679,'Smm 0.00000&#160;&#160;Jmm 0.00000','#333',9,'ct',106);
[433,436,439,442,451,452.5,556,559,647,650,666,668,680].forEach(a=>L([[12,a+.5],[1322,a+.5]],'#222',1));
L([[12,82.5],[1322,82.5]],'#333',1);
L([[12.5,82],[12.5,680]],'#222',1);
L([[1322.5,82],[1322.5,680]],'#222',1);
[[36338,99],[35843,132],[35333,165],[34838,198],[34343,231],[33848,264],[33338,297],[32843,330],[32348,363],[31853,396],[31358,429]].forEach(([p,y])=>{L([[1322,y+.5],[1326,y+.5]],'#222',1);T(1327,y+4,p+'.00','#222',10.500,'ct',38)});
R(1323,111,45,11,'#1a1a1a');T(1327,120,'36078.54','#f0f0f0',10.500,'ct',38);
T(1325,464,'1.5712','#222',10.500,'ct',28);T(1325,555,'1.5625','#222',10.500,'ct',28);T(1325,570,'1.6095','#222',10.500,'ct',28);T(1325,645,'0.7573','#222',10.500,'ct',28);
L([[1325,553.5],[1372,553.5]],'#333',1,'stroke-dasharray="1 1"');L([[1325,646.5],[1372,646.5]],'#333',1,'stroke-dasharray="1 1"');
[500,594].forEach(a=>{R(1323,a,6,11,'#000');T(1323.5,a+9,'0','#f0f0f0',10.500)});
T(1325,659,'0.00','#222',10,'ct',18);T(1325,663,'2.5','#222',10,'ct',16);
T(1325,677,'0.00','#222',10,'ct',18);T(1327,677,'0.00','#222',10,'ct',18);
['29 Nov 2022','21 Dec 2022','16 Jan 2023','7 Feb 2023','1 Mar 2023','21 Mar 2023','12 Apr 2023','4 May 2023','26 May 2023','19 Jun 2023','11 Jul 2023','2 Aug 2023','24 Aug 2023','15 Sep 2023','9 Oct 2023','30 Oct 2023','21 Nov 2023'].forEach((s,i)=>{const x=13+64*i;L([[x+.5,680],[x+.5,684]],'#222',1);T(x-1,693,s,'#222',10.500,'ct',s.length==11?52:47)});
document.getElementById('plot').innerHTML=o;
})();
</script>
</body>
</html>
